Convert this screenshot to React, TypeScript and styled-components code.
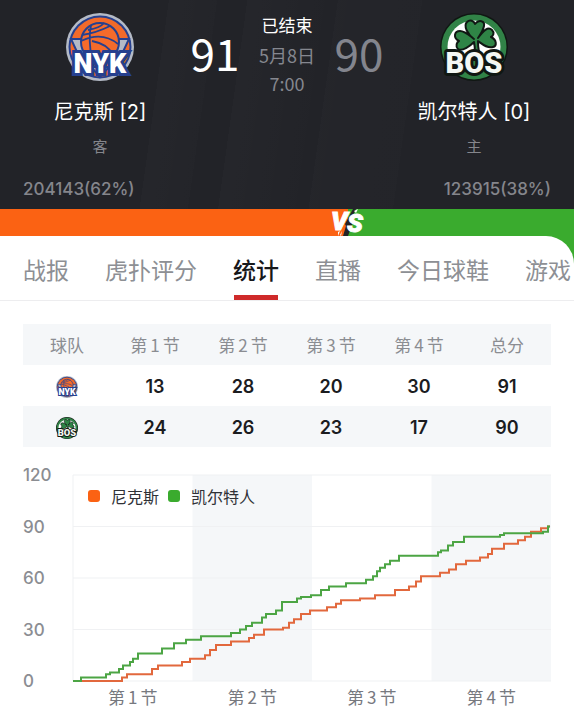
import React from "react";
import styled, { createGlobalStyle } from "styled-components";

const ORANGE = "#fb6213";
const GREEN = "#3aab2e";
const CJK = '"Noto Sans CJK SC", sans-serif';
const LATIN = 'Inter, "Noto Sans CJK SC", sans-serif';

const GlobalStyle = createGlobalStyle`
  *, *::before, *::after { box-sizing: border-box; }
  body { margin: 0; background: #fff; font-family: ${CJK}; overflow-x: hidden; }
`;

const Page = styled.div`
  width: 100%;
  overflow: hidden;
  background: #fff;
`;

const Header = styled.header`
  padding: 13px 23px 8px;
  color: #fff;
  background:
    linear-gradient(98deg, transparent 28%, #ffffff04 28%, #ffffff02 36%, transparent 36%, transparent 41%,
      #ffffff04 41%, transparent 56%, #ffffff03 56%, #ffffff02 70%, transparent 70%),
    #222328;
`;

const Matchup = styled.div`
  display: grid;
  grid-template-columns: 154fr 76fr 68fr 76fr 154fr;
  justify-items: center;
`;

const Team = styled.div`
  display: flex;
  flex-direction: column;
  align-items: center;
  white-space: nowrap;
`;

const TeamName = styled.h2`
  margin: 16px 0 0;
  font-family: ${LATIN};
  font-size: 20px;
  line-height: 30px;
  font-weight: 400;
`;

const Side = styled.span`
  margin-top: 7px;
  font-size: 15px;
  line-height: 24px;
  color: #85868c;
`;

const Score = styled.strong<{ $lost?: boolean }>`
  margin-top: 6px;
  font-size: 44px;
  line-height: 66px;
  font-weight: 400;
  color: ${(p) => (p.$lost ? "#83858e" : "#fff")};
`;

const GameInfo = styled.div`
  display: flex;
  flex-direction: column;
  align-items: center;
  white-space: nowrap;
  font-size: 18px;
  line-height: 26px;
  color: #85878f;
`;

const Status = styled.span`
  margin-bottom: 5px;
  font-size: 17px;
  line-height: 24px;
  color: #fff;
`;

const Clock = styled.time`
  margin-top: 2px;
`;

const Votes = styled.div`
  display: flex;
  justify-content: space-between;
  margin-top: 19px;
  font-family: ${LATIN};
  font-size: 17px;
  line-height: 24px;
  font-weight: 500;
  color: #85868c;
`;

const VoteBar = styled.div`
  display: flex;
  height: 62px;
`;

const HomeShare = styled.div`
  flex: 348;
  position: relative;
  background: ${ORANGE};
`;

const AwayShare = styled.div`
  flex: 226;
  background: ${GREEN};
`;

const VersusMark = styled.svg`
  position: absolute;
  z-index: 1;
  top: 0;
  right: -18px;
  overflow: visible;
`;

const Sheet = styled.main`
  position: relative;
  margin-top: -35px;
  background: #fff;
  border-radius: 0 28px 0 0;
`;

const Tabs = styled.nav`
  display: flex;
  gap: 36px;
  height: 65px;
  padding: 0 23px;
  overflow: hidden;
  border-bottom: 1px solid #ededef;
`;

const Tab = styled.button<{ $active?: boolean }>`
  display: flex;
  flex: none;
  flex-direction: column;
  justify-content: space-between;
  padding: 16px 0 0;
  border: 0;
  background: none;
  font-family: ${CJK};
  font-size: 23px;
  line-height: 34px;
  font-weight: ${(p) => (p.$active ? 500 : 400)};
  color: ${(p) => (p.$active ? "#17181b" : "#8d8f94")};
  cursor: pointer;

  &::after {
    content: "";
    height: 5px;
    margin: 0 1px;
    background: ${(p) => (p.$active ? "#cf2a2a" : "transparent")};
  }
`;

const Content = styled.div`
  padding: 23px;
`;

const ScoreTable = styled.table`
  width: 100%;
  table-layout: fixed;
  border-collapse: collapse;
  text-align: center;
`;

const HeadCell = styled.th`
  height: 41px;
  padding: 0;
  background: #f5f7f9;
  font-size: 17px;
  line-height: 24px;
  font-weight: 400;
  color: #8b8d92;
`;

const Row = styled.tr`
  background: #fff;
  &:nth-child(even) { background: #f5f7f9; }
`;

const Cell = styled.td`
  height: 41px;
  padding: 2px 0 0;
  font-family: ${LATIN};
  font-size: 18px;
  line-height: 24px;
  font-weight: 600;
  color: #1b1c1f;

  svg { display: block; margin: 0 auto; }
`;

const Digit = styled.span`
  margin: 0 3px;
`;

const Chart = styled.section`
  display: grid;
  grid-template-columns: 50px 1fr;
  margin-top: 28px;
`;

const YAxis = styled.div`
  display: flex;
  flex-direction: column;
  justify-content: space-between;
  margin: -12px 0;
  font-family: ${LATIN};
  font-size: 17px;
  line-height: 24px;
  font-weight: 500;
  color: #8b8d92;
`;

const Plot = styled.div`
  position: relative;
  height: 206px;

  > svg { display: block; width: 100%; height: 100%; overflow: visible; }
`;

const Legend = styled.div`
  position: absolute;
  top: 9px;
  left: 15px;
  display: flex;
  align-items: center;
  gap: 9px;
  font-size: 16px;
  line-height: 24px;
  color: #2f3136;
`;

const Swatch = styled.i<{ $color: string }>`
  width: 12px;
  height: 12px;
  border-radius: 3px;
  background: ${(p) => p.$color};
`;

const LegendName = styled.span`
  margin-left: 2px;
`;

const XAxis = styled.div`
  grid-column: 2;
  display: grid;
  grid-template-columns: repeat(4, 1fr);
  margin-top: 4px;
  text-align: center;
  font-size: 17px;
  line-height: 24px;
  color: #77797f;
`;

function KnicksLogo({ size }: { size: number }) {
  return (
    <svg width={size} height={size} viewBox="0 0 68 68" role="img" aria-label="NYK">
      <circle cx="34" cy="34" r="34" fill="#b4bac6" />
      <circle cx="34" cy="34" r="31.5" fill="#26408f" />
      <circle cx="34" cy="34" r="29.5" fill="#f26a2a" />
      <path d="M5 26H18V41H12ZM63 26H50V41H56Z" fill="#b4bac6" stroke="#26408f" strokeWidth="2" />
      <path d="M15 26L34 61L53 26" fill="#f26a2a" stroke="#26408f" strokeWidth="2" />
      <circle cx="34" cy="29" r="19" fill="#f56b2b" stroke="#26408f" strokeWidth="2" />
      <path
        d="M25 12Q22 27 26 46M16 22Q30 20 44 13M15 28Q36 18 52 31M26 28Q42 31 47 42M38 10Q34 15 22 17"
        fill="none" stroke="#26408f" strokeWidth="1.8"
      />
      <path d="M25 54L34 64L43 54Z" fill="#b4bac6" stroke="#26408f" strokeWidth="2" />
      <text
        x="34" y="60" textAnchor="middle" fontFamily="Roboto, sans-serif" fontWeight="900" fontSize="27"
        fill="#fff" stroke="#26408f" strokeWidth="6" paintOrder="stroke"
      >NYK</text>
    </svg>
  );
}

function CelticsLogo({ size }: { size: number }) {
  return (
    <svg width={size} height={size} viewBox="0 0 68 68" role="img" aria-label="BOS">
      <circle cx="34" cy="34" r="34" fill="#101713" />
      <circle cx="34" cy="34" r="32.5" fill="#318347" />
      <circle cx="34" cy="34" r="26.5" fill="#fff" />
      <path
        d="M34 26C28 22 23 13 27 9C30 6 34 8 35 11C39 6 45 8 44 13C43 18 40 22 38 25C43 18 48 13 52 17C55 20 53 23 51 24C57 27 57 33 53 34C47 36 41 30 38 28C38 34 38 40 44 47H33C36 40 35 34 34 29C30 33 22 39 18 36C15 33 17 29 19 28C13 25 14 18 20 18C25 18 30 23 34 26Z"
        fill="#2f8446" stroke="#101713" strokeWidth="2" strokeLinejoin="round"
      />
      <path d="M11 48H57Q48 66 34 66T11 48Z" fill="#318347" />
      <text
        x="34" y="60" textAnchor="middle" fontFamily="Roboto, sans-serif" fontWeight="900" fontSize="29"
        fill="#f4f8f4" stroke="#101713" strokeWidth="6" strokeLinejoin="round" paintOrder="stroke"
      >BOS</text>
    </svg>
  );
}

function Versus() {
  return (
    <VersusMark width="36" height="27" viewBox="0 0 36 27" role="img" aria-label="VS">
      <path d="M23 0L26 0L22 8L24 10L18 27L13 27L16 17L15 15Z" fill="#252326" />
      <g fontFamily="Roboto, sans-serif" fontStyle="italic" fontWeight="900" fill="#fff" stroke="#fff">
        <text x="1" y="21" fontSize="26">V</text>
        <text x="17" y="23" fontSize="26">S</text>
      </g>
      <path d="M24 2L28 0L26 4ZM8 23L10 22L8 27ZM12 22L11 27L10 26Z" fill="#fff" />
    </VersusMark>
  );
}

type Step = [number, number];

const PLOT_WIDTH = 478;
const MAX_SCORE = 120;

const knicks: Step[] = [
  [49, 2], [54, 4], [79, 7], [85, 9], [109, 11], [117, 13], [132, 15], [137, 18], [143, 21], [158, 23],
  [176, 25], [181, 27], [191, 30], [210, 31], [216, 34], [221, 36], [228, 39], [237, 41], [254, 43],
  [263, 45], [268, 47], [287, 48], [302, 50], [322, 53], [336, 55], [343, 58], [348, 61], [367, 63],
  [376, 65], [383, 68], [393, 70], [407, 72], [415, 74], [419, 77], [431, 80], [445, 82], [452, 84],
  [458, 87], [468, 89], [475, 90],
];

const celtics: Step[] = [
  [8, 2], [33, 4], [37, 5], [46, 7], [50, 9], [57, 11], [60, 13], [65, 16], [89, 19], [101, 22],
  [113, 24], [128, 26], [158, 28], [167, 30], [173, 32], [179, 34], [189, 37], [193, 39], [203, 41],
  [209, 46], [224, 48], [228, 49], [238, 50], [248, 53], [256, 55], [273, 57], [293, 59], [300, 61],
  [304, 64], [307, 66], [312, 68], [317, 70], [326, 73], [365, 75], [368, 76], [375, 79], [380, 81],
  [391, 84], [427, 85], [431, 86], [470, 87], [475, 90],
];

const stepPath = (steps: Step[]) =>
  `M0 ${MAX_SCORE}` + steps.map(([x, v]) => `H${x}V${MAX_SCORE - v}`).join("") + "H477";

const Quarter = ({ n }: { n: number }) => (
  <>第<Digit>{n}</Digit>节</>
);

const quarters = [1, 2, 3, 4];
const tabs = ["战报", "虎扑评分", "统计", "直播", "今日球鞋", "游戏"];
const rows = [
  { id: "nyk", logo: <KnicksLogo size={22} />, scores: [13, 28, 20, 30, 91] },
  { id: "bos", logo: <CelticsLogo size={22} />, scores: [24, 26, 23, 17, 90] },
];

export default function App() {
  return (
    <Page>
      <GlobalStyle />
      <Header>
        <Matchup>
          <Team>
            <KnicksLogo size={68} />
            <TeamName>尼克斯 [2]</TeamName>
            <Side>客</Side>
          </Team>
          <Score>91</Score>
          <GameInfo>
            <Status>已结束</Status>
            <time>5月8日</time>
            <Clock>7:00</Clock>
          </GameInfo>
          <Score $lost>90</Score>
          <Team>
            <CelticsLogo size={68} />
            <TeamName>凯尔特人 [0]</TeamName>
            <Side>主</Side>
          </Team>
        </Matchup>
        <Votes>
          <span>204143(62%)</span>
          <span>123915(38%)</span>
        </Votes>
      </Header>
      <VoteBar>
        <HomeShare><Versus /></HomeShare>
        <AwayShare />
      </VoteBar>
      <Sheet>
        <Tabs>
          {tabs.map((t) => (
            <Tab key={t} type="button" $active={t === "统计"}>{t}</Tab>
          ))}
        </Tabs>
        <Content>
          <ScoreTable>
            <thead>
              <tr>
                <HeadCell scope="col">球队</HeadCell>
                {quarters.map((n) => <HeadCell key={n} scope="col"><Quarter n={n} /></HeadCell>)}
                <HeadCell scope="col">总分</HeadCell>
              </tr>
            </thead>
            <tbody>
              {rows.map((r) => (
                <Row key={r.id}>
                  <Cell>{r.logo}</Cell>
                  {r.scores.map((s, i) => <Cell key={i}>{s}</Cell>)}
                </Row>
              ))}
            </tbody>
          </ScoreTable>
          <Chart>
            <YAxis>
              {[120, 90, 60, 30, 0].map((v) => <span key={v}>{v}</span>)}
            </YAxis>
            <Plot>
              <svg viewBox={`0 0 ${PLOT_WIDTH} ${MAX_SCORE}`} preserveAspectRatio="none" aria-hidden="true">
                <path d="M119.5 0H239V120H119.5ZM358.5 0H478V120H358.5Z" fill="#f5f7f9" />
                <g fill="none" stroke="#f0f1f3">
                  <path d="M0 0H478M0 30H478M0 60H478M0 90H478M0 120H478M0 0V120" vectorEffect="non-scaling-stroke" />
                </g>
                <g fill="none" strokeWidth="2">
                  <path d={stepPath(knicks)} stroke="#e2683d" vectorEffect="non-scaling-stroke" />
                  <path d={stepPath(celtics)} stroke="#4ca544" vectorEffect="non-scaling-stroke" />
                </g>
              </svg>
              <Legend>
                <Swatch $color={ORANGE} />
                <LegendName>尼克斯</LegendName>
                <Swatch $color={GREEN} />
                <LegendName>凯尔特人</LegendName>
              </Legend>
            </Plot>
            <XAxis>
              {quarters.map((n) => <span key={n}><Quarter n={n} /></span>)}
            </XAxis>
          </Chart>
        </Content>
      </Sheet>
    </Page>
  );
}
